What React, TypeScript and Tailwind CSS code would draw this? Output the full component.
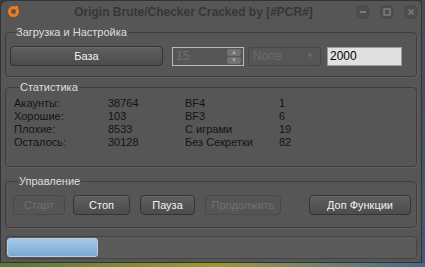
import React from "react";

const font = { fontFamily: '"Liberation Sans", Arial, sans-serif' };

const Btn = ({ label, w, disabled }: { label: string; w: string; disabled?: boolean }) => (
  <div
    className={`${w} h-[20px] flex items-center justify-center rounded-[4px] border text-[11px] ${
      disabled
        ? "border-[#494949] text-[#6f6f6f] bg-[#555555]"
        : "border-[#343434] text-[#f2f2f2] bg-gradient-to-b from-[#5f5f5f] to-[#4c4c4c] shadow-[inset_0_1px_0_#6a6a6a]"
    }`}
  >
    {label}
  </div>
);

const Group = ({ title, className, children }: { title: string; className: string; children: React.ReactNode }) => (
  <fieldset className={`border border-[#3e3e3e] rounded-[4px] shadow-[1px_1px_0_#5f5f5f] ${className}`}>
    <legend className="ml-[5px] px-[1px] text-[11px] leading-[14px] text-[#dedede]">{title}</legend>
    {children}
  </fieldset>
);

const stats: [string, string, string, string][] = [
  ["Акаунты:", "38764", "BF4", "1"],
  ["Хорошие:", "103", "BF3", "6"],
  ["Плохие:", "8533", "С играми", "19"],
  ["Осталось:", "30128", "Без Секретки", "82"],
];

export default function App() {
  return (
    <div className="w-[425px] h-[267px] flex flex-col bg-[#3b3b3b] overflow-hidden" style={font}>
      <div className="flex h-[263px]">
        <div className="w-[422px] h-full flex flex-col bg-[#565656] border border-[#333333] rounded-tl-[7px] rounded-tr-[4px]">
          {/* title bar */}
          <div className="h-[21px] flex items-center shrink-0">
            <div className="w-[24px] flex justify-center">
              <svg width="13" height="13" viewBox="0 0 13 13">
                <circle cx="6.5" cy="6.5" r="4" fill="none" stroke="#f07b1c" strokeWidth="3" />
                <circle cx="9.8" cy="2" r="1.3" fill="#f07b1c" />
              </svg>
            </div>
            <div className="flex-1 text-center pl-[6px] text-[12px] font-bold text-[#363636]">
              Origin Brute/Checker Cracked by [#PCR#]
            </div>
            <div className="flex items-center gap-[10px] pr-[3px]">
              {["min", "max", "close"].map((k) => (
                <div
                  key={k}
                  className="w-[14px] h-[14px] rounded-full bg-[#4e4e4e] border border-[#474747] flex items-center justify-center"
                >
                  <svg width="8" height="8" viewBox="0 0 8 8">
                    {k === "min" && <rect x="1" y="3" width="6" height="2" fill="#7c7c7c" />}
                    {k === "max" && <rect x="1" y="1" width="6" height="6" fill="none" stroke="#7c7c7c" strokeWidth="1.5" />}
                    {k === "close" && <path d="M1.5 1.5 L6.5 6.5 M6.5 1.5 L1.5 6.5" stroke="#7c7c7c" strokeWidth="1.6" />}
                  </svg>
                </div>
              ))}
            </div>
          </div>

          <div className="px-[4px] flex flex-col">
            <Group title="Загрузка и Настройка" className="mt-[3px] pt-[7px] pb-[10px] pl-[4px] pr-[2px]">
              <div className="flex items-center h-[20px]">
                <Btn label="База" w="w-[153px]" />
                <div className="ml-[9px] w-[72px] h-[19px] border border-[#b9b9b9] flex items-center justify-between pl-[3px] pr-[2px]">
                  <span className="text-[12px] text-[#707070]">15</span>
                  <div className="flex flex-col gap-[1px]">
                    <div className="w-[14px] h-[7px] rounded-[2px] bg-[#727272] flex items-center justify-center text-[6px] leading-none text-[#a8a8a8]">▲</div>
                    <div className="w-[14px] h-[7px] rounded-[2px] bg-[#727272] flex items-center justify-center text-[6px] leading-none text-[#a8a8a8]">▼</div>
                  </div>
                </div>
                <div className="ml-[4px] w-[73px] h-[19px] rounded-[3px] border border-[#474747] flex items-center justify-between pl-[4px] pr-[6px] text-[#6c6c6c]">
                  <span className="text-[12px]">None</span>
                  <span className="text-[8px]">▼</span>
                </div>
                <div className="ml-[6px] w-[75px] h-[19px] border border-[#9c9c9c] bg-[#e0e0e0] flex items-center pl-[2px] text-[12px] text-black">
                  2000
                </div>
              </div>
            </Group>

            <Group title="Статистика" className="mt-[3px] pt-[3px] pb-[17px] pl-[8px]">
              <div className="grid grid-cols-[94px_77px_94px_60px] text-[11px] leading-[13px] text-[#141414]">
                {stats.map((r) => r.map((c, i) => <div key={r[0] + i}>{c}</div>))}
              </div>
            </Group>

            <Group title="Управление" className="mt-[7px] pt-[7px] pb-[12px] pl-[7px]">
              <div className="flex items-center">
                <Btn label="Старт" w="w-[52px]" disabled />
                <div className="ml-[8px]"><Btn label="Стоп" w="w-[57px]" /></div>
                <div className="ml-[10px]"><Btn label="Пауза" w="w-[55px]" /></div>
                <div className="ml-[10px]"><Btn label="Продолжить" w="w-[76px]" disabled /></div>
                <div className="ml-[28px]"><Btn label="Доп Функции" w="w-[102px]" /></div>
              </div>
            </Group>

            <div className="mt-[8px] h-[23px] rounded-[4px] border border-[#434343] bg-[#5b5b5b] p-[1px]">
              <div className="w-[91px] h-full rounded-[3px] border border-[#b4cde5] bg-gradient-to-b from-[#a6c8e8] to-[#7ba8d2]" />
            </div>
          </div>
        </div>
        <div className="flex-1 bg-gradient-to-b from-[#4a4e55] to-[#3f5a78]" />
      </div>
      <div className="h-[4px] bg-gradient-to-r from-[#4f7a3a] via-[#9a9a2c] to-[#3d6e8c]" />
    </div>
  );
}
